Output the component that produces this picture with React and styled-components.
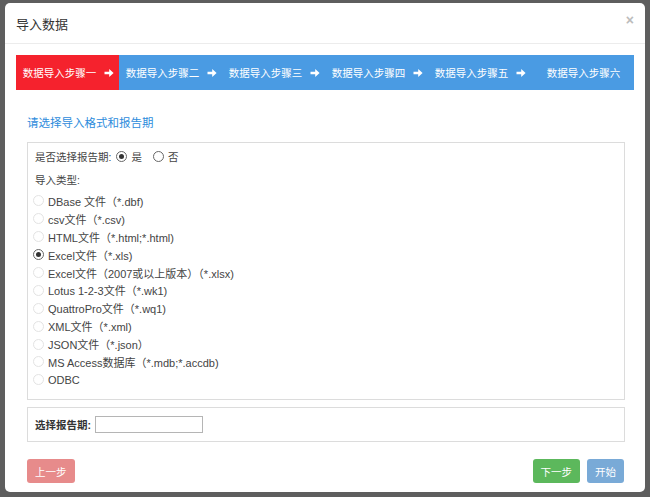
import React from "react";
import styled, { createGlobalStyle } from "styled-components";

const GlobalStyle = createGlobalStyle`
	html, body {
		margin: 0;
		padding: 0;
		background: #5e5e5e;
	}
	body {
		font-family: "Liberation Sans", "Noto Sans CJK SC", sans-serif;
		color: #333;
	}
`;

const steps = ["一", "二", "三", "四", "五", "六"];

const types = [
	"DBase 文件（*.dbf)",
	"csv文件（*.csv)",
	"HTML文件（*.html;*.html)",
	"Excel文件（*.xls)",
	"Excel文件（2007或以上版本）（*.xlsx)",
	"Lotus 1-2-3文件（*.wk1)",
	"QuattroPro文件（*.wq1)",
	"XML文件（*.xml)",
	"JSON文件（*.json）",
	"MS Access数据库（*.mdb;*.accdb)",
	"ODBC",
];

const Arrow = () => (
	<svg width="10" height="10" viewBox="0 0 10 10">
		<path d="M0.5 3.8 H5.2 V1 L9.6 5 L5.2 9 V6.2 H0.5 Z" fill="#fff" />
	</svg>
);

const App = () => {
	return (
		<Screen>
			<GlobalStyle />
			<Modal>
				<Header>
					<Title>导入数据</Title>
					<Close>×</Close>
				</Header>
				<Body>
					<StepBar>
						{steps.map((s, i) => (
							<Step key={s} active={i === 0}>
								<span>数据导入步骤{s}</span>
								{i < 5 && <Arrow />}
							</Step>
						))}
					</StepBar>
					<Content>
						<SectionTitle>请选择导入格式和报告期</SectionTitle>
						<Panel>
							<Line>
								是否选择报告期:
								<Choice>
									<Radio checked dark />是
								</Choice>
								<Choice>
									<Radio dark />否
								</Choice>
							</Line>
							<Line>导入类型:</Line>
							<List>
								{types.map((t, i) => (
									<Option key={t}>
										<Radio checked={i === 3} dark={i === 3} />
										{t}
									</Option>
								))}
							</List>
						</Panel>
						<DatePanel>
							<Label>选择报告期:</Label>
							<DateInput />
						</DatePanel>
						<Footer>
							<Button color="#e78b8b">上一步</Button>
							<Right>
								<Button color="#5cb85c">下一步</Button>
								<Button color="#79aad7">开始</Button>
							</Right>
						</Footer>
					</Content>
				</Body>
			</Modal>
		</Screen>
	);
};

const Screen = styled.div`
	width: 650px;
	height: 497px;
	padding: 3px 5px 0 5px;
	box-sizing: border-box;
`;

const Modal = styled.div`
	width: 640px;
	height: 489px;
	background: #fff;
	border-radius: 5px;
	display: flex;
	flex-direction: column;
	box-sizing: border-box;
`;

const Header = styled.div`
	height: 40px;
	border-bottom: 1px solid #ececec;
	display: flex;
	align-items: center;
	justify-content: space-between;
	padding: 0 11px;
`;

const Title = styled.div`
	font-size: 13px;
	color: #333;
`;

const Close = styled.div`
	font-size: 14px;
	color: #bcbcbc;
	font-weight: bold;
	margin-top: -6px;
`;

const Body = styled.div`
	padding: 11px 11px 0 11px;
	display: flex;
	flex-direction: column;
	flex: 1;
`;

const StepBar = styled.div`
	height: 35px;
	background: #4a9be3;
	display: flex;
`;

const Step = styled.div`
	flex: 1;
	display: flex;
	align-items: center;
	justify-content: center;
	gap: 8px;
	color: #fff;
	font-size: 10.5px;
	background: ${(p) => (p.active ? "#f5222d" : "transparent")};
	padding-left: 2px;
`;

const Content = styled.div`
	padding: 0 9px 0 11px;
	display: flex;
	flex-direction: column;
`;

const SectionTitle = styled.div`
	color: #2d8cdc;
	font-size: 11.5px;
	margin-top: 26px;
	height: 14px;
	line-height: 14px;
`;

const Panel = styled.div`
	margin-top: 12px;
	height: 258px;
	border: 1px solid #dcdcdc;
	box-sizing: border-box;
	padding: 6px 8px 0 7px;
	font-size: 10.5px;
	color: #444;
`;

const Line = styled.div`
	height: 14px;
	display: flex;
	align-items: center;
	margin-bottom: 9px;
`;

const Choice = styled.span`
	display: inline-flex;
	align-items: center;
	margin-left: 5px;
	margin-right: 6px;
	gap: 4px;
`;

const List = styled.div`
	display: flex;
	flex-direction: column;
	margin-top: -3px;
	margin-left: -2px;
	font-size: 11px;
`;

const Option = styled.div`
	height: 17.9px;
	display: flex;
	align-items: center;
	gap: 4px;
`;

const Radio = styled.span`
	width: 9px;
	height: 9px;
	border-radius: 50%;
	border: 1px solid ${(p) => (p.dark ? "#666" : "#e3e3e3")};
	display: inline-flex;
	align-items: center;
	justify-content: center;
	box-sizing: content-box;

	&::after {
		content: "";
		width: 5px;
		height: 5px;
		border-radius: 50%;
		background: ${(p) => (p.checked ? "#333" : "transparent")};
	}
`;

const DatePanel = styled.div`
	margin-top: 7px;
	height: 35px;
	border: 1px solid #dcdcdc;
	box-sizing: border-box;
	display: flex;
	align-items: center;
	padding-left: 7px;
`;

const Label = styled.span`
	font-size: 10.5px;
	font-weight: bold;
	color: #333;
`;

const DateInput = styled.input`
	width: 108px;
	height: 17px;
	box-sizing: border-box;
	border: 1px solid #b5b5b5;
	margin-left: 4px;
	padding: 0;
`;

const Footer = styled.div`
	margin-top: 17px;
	display: flex;
	justify-content: space-between;
	padding-right: 1px;
`;

const Right = styled.div`
	display: flex;
	gap: 7px;
`;

const Button = styled.div`
	height: 24px;
	padding: 0 8px;
	border-radius: 3px;
	background: ${(p) => p.color};
	color: #fff;
	font-size: 10.5px;
	display: flex;
	align-items: center;
	justify-content: center;
`;

export default App;
